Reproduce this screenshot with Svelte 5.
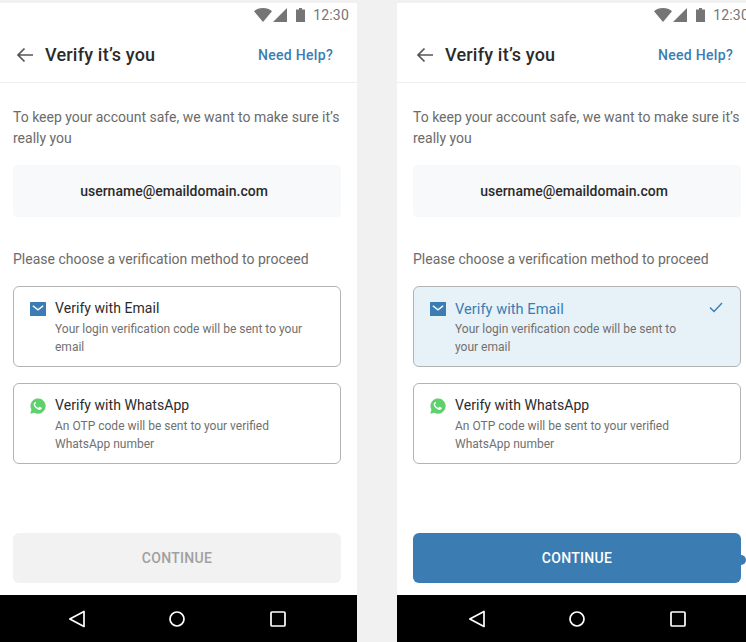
<script lang="ts">
  const screens = [
    { selected: false },
    { selected: true },
  ];
</script>

{#snippet phone(selected: boolean)}
  <section class="phone" class:shifted={selected}>
    <div class="status">
      <svg class="wifi" width="18" height="14" viewBox="0 0 18 14"><path d="M0 3.2C2.4 1.2 5.5 0 9 0s6.600 1.200 9 3.200L9 14z" fill="#757575" /></svg>
      <svg class="signal" width="14" height="14" viewBox="0 0 14 14"><path d="M14 0v14H0z" fill="#757575" /></svg>
      <svg class="battery" width="9" height="14" viewBox="0 0 9 14"><path d="M3 0h3v1.500h3V14H0V1.500h3z" fill="#757575" /></svg>
      <span class="time">12:30</span>
    </div>

    <header class="bar">
      <svg class="back" width="18" height="16" viewBox="0 0 18 16"><path d="M17 8H2M8.500 1.500 2 8l6.500 6.500" fill="none" stroke="#555" stroke-width="1.700" /></svg>
      <h1>Verify it’s you</h1>
      <a class="help" href="#help">Need Help?</a>
    </header>

    <main class="content">
      <p class="intro">To keep your account safe, we want to make sure it’s really you</p>
      <div class="email-box">username@emaildomain.com</div>
      <p class="prompt">Please choose a verification method to proceed</p>

      <div class="option" class:selected>
        <svg class="icon" width="16" height="14" viewBox="0 0 16 14"><rect width="16" height="14" rx="0.500" fill="#3b7db3" /><path d="M2.800 3.800l5.200 4 5.200-4" fill="none" stroke="#fff" stroke-width="1.400" /></svg>
        <div class="text">
          <div class="name">Verify with Email</div>
          <div class="desc">Your login verification code will be sent to {#if selected}<br />{/if}your {#if !selected}<br />{/if}email</div>
        </div>
        {#if selected}
          <svg class="check" width="14" height="11" viewBox="0 0 14 11"><path d="M1 5.500l4 4L13 1" fill="none" stroke="#3b7db3" stroke-width="1.400" /></svg>
        {/if}
      </div>

      <div class="option">
        <svg class="icon whatsapp" width="16" height="16" viewBox="0 0 16 16">
          <path d="M0.300 15.700l1.100-4A7.600 7.600 0 1 1 4.400 14.700z" fill="#5ed06c" />
          <path d="M5.500 3.900c-.3 0-.7.100-1 .5-.4.500-.8 1.100-.8 2 0 1.100.8 2.300 1.900 3.400 1.200 1.200 2.600 2.100 3.900 2.100.9 0 1.700-.5 2-1.100.2-.4.200-.9.100-1.100l-1.900-.9c-.2-.1-.4 0-.5.100l-.7.800c-.1.100-.3.200-.5.100-.7-.3-1.300-.7-1.800-1.200-.5-.5-.9-1.100-1.200-1.700-.1-.2 0-.4.100-.5l.5-.6c.1-.2.200-.3.100-.5L6 4.300c-.1-.3-.3-.4-.5-.4z" fill="#fff" />
        </svg>
        <div class="text">
          <div class="name">Verify with WhatsApp</div>
          <div class="desc">An OTP code will be sent to your verified<br />WhatsApp number</div>
        </div>
      </div>

      <button class="continue" class:active={selected} type="button">CONTINUE</button>
    </main>

    <nav class="softkeys">
      <svg width="18" height="18" viewBox="0 0 18 18"><path d="M16 1.500v15L1.800 9z" fill="none" stroke="#fff" stroke-width="1.700" stroke-linejoin="round" /></svg>
      <svg width="18" height="18" viewBox="0 0 18 18"><circle cx="9" cy="9" r="7" fill="none" stroke="#fff" stroke-width="1.700" /></svg>
      <svg class="recents" width="18" height="18" viewBox="0 0 18 18"><rect x="2" y="2" width="14" height="14" rx="1" fill="none" stroke="#fff" stroke-width="1.700" /></svg>
    </nav>
  </section>
{/snippet}

<div class="page">
  {#each screens as s}
    {@render phone(s.selected)}
  {/each}
</div>

<style>
  :global(body) {
    margin: 0;
    background: #f1f1f1;
  }

  .page {
    display: flex;
    gap: 40px;
    width: 746px;
    height: 642px;
    padding-top: 3px;
    box-sizing: border-box;
    overflow: hidden;
    font-family: Roboto, "Liberation Sans", sans-serif;
  }

  .phone {
    flex: 0 0 357px;
    display: flex;
    flex-direction: column;
    height: 639px;
    background: #fff;
  }

  .status {
    display: flex;
    align-items: center;
    justify-content: flex-end;
    height: 24px;
    padding-right: 8px;
    flex: none;
  }

  .wifi { margin-right: 1px; }
  .signal { margin-right: 9px; }
  .battery { margin-right: 8px; }

  .time {
    font-size: 14px;
    color: #757575;
    letter-spacing: 0.2px;
  }

  .bar {
    display: flex;
    align-items: center;
    height: 55px;
    padding: 0 24px 0 16px;
    border-bottom: 1px solid #eeeeee;
    flex: none;
  }

  .back { margin-right: 11px; }

  h1 {
    margin: 0;
    font-size: 18px;
    font-weight: 500;
    letter-spacing: 0.2px;
    color: #2b2b2b;
  }

  .help {
    margin-left: auto;
    font-size: 14px;
    font-weight: 500;
    letter-spacing: 0.3px;
    color: #3b7db3;
    text-decoration: none;
  }

  .content {
    flex: 1;
    display: flex;
    flex-direction: column;
    padding: 24px 16px 12px 13px;
  }

  /* the right-hand screen sits 3px further in than the left one */
  .shifted .status { padding-right: 5px; }
  .shifted .bar { padding: 0 21px 0 19px; }
  .shifted .content { padding: 24px 13px 12px 16px; }
  .shifted .softkeys { padding-left: 71px; }

  .intro, .prompt {
    margin: 0;
    font-size: 14px;
    line-height: 21px;
    color: #6b6b6b;
  }

  .email-box {
    display: flex;
    align-items: center;
    justify-content: center;
    height: 52px;
    margin-top: 16px;
    padding-right: 6px;
    border-radius: 4px;
    background: #f8f9fb;
    font-size: 14px;
    font-weight: 500;
    color: #2b2b2b;
  }

  .prompt { margin-top: 32px; margin-bottom: 16px; }

  .option {
    display: flex;
    align-items: flex-start;
    height: 81px;
    box-sizing: border-box;
    padding: 12px 14px 0 16px;
    margin-bottom: 16px;
    border: 1px solid #b3b3b3;
    border-radius: 6px;
    background: #fff;
  }

  .option .icon { flex: none; margin-top: 3px; margin-right: 9px; }
  .option .icon.whatsapp { margin-top: 2px; }

  .name {
    font-size: 14px;
    line-height: 18px;
    letter-spacing: 0.05px;
    color: #2b2b2b;
  }

  .desc {
    margin-top: 3px;
    font-size: 12px;
    line-height: 18px;
    color: #707070;
  }

  .option.selected { background: #e7f2f8; }
  .option.selected .name {
    padding-top: 1px;
    margin-bottom: -1px;
    font-size: 14.6px;
    color: #3b7db3;
  }
  .check { margin-left: auto; margin-top: 3px; margin-right: 3px; }

  .continue {
    position: relative;
    height: 50px;
    margin-top: auto;
    border: 0;
    border-radius: 6px;
    background: #f2f2f2;
    font: 500 14px Roboto, "Liberation Sans", sans-serif;
    letter-spacing: 0.3px;
    color: #a0a0a0;
  }

  .continue.active {
    background: #3b7db3;
    color: #fff;
  }

  .continue.active::after {
    content: "";
    position: absolute;
    right: -5px;
    top: 22px;
    width: 10px;
    height: 10px;
    border-radius: 50%;
    background: #3b7db3;
  }

  .softkeys {
    flex: none;
    display: flex;
    align-items: center;
    gap: 82px;
    height: 47px;
    padding-left: 68px;
    background: #000;
  }

  .recents { margin-left: 1px; }
</style>
